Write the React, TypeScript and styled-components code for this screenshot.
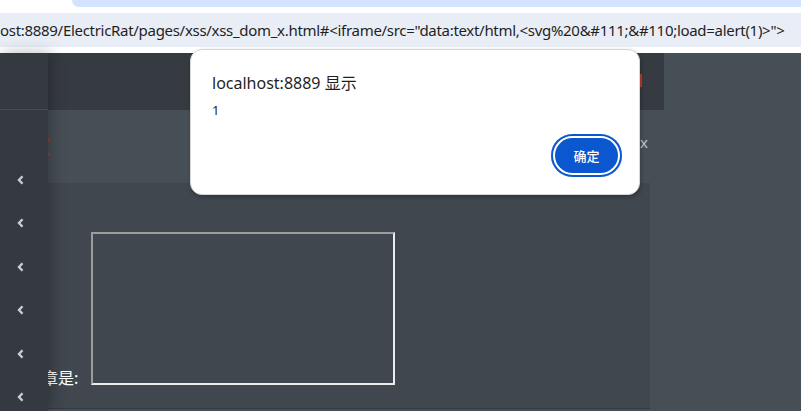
import React from "react";
import styled, { createGlobalStyle } from "styled-components";

const Global = createGlobalStyle`
  html, body { margin: 0; padding: 0; width: 801px; height: 411px; overflow: hidden; background: #fff; }
  * { box-sizing: border-box; }
`;

const Shell = styled.div`
  position: relative;
  width: 801px;
  height: 411px;
  display: flex;
  flex-direction: column;
  overflow: hidden;
  font-family: "Noto Sans", "Noto Sans CJK SC", sans-serif;
`;

const TabStrip = styled.div`
  height: 7px;
  background: #fff;
  display: flex;
`;

const InactiveStrip = styled.div`
  flex: 1;
  margin-left: 72px;
  background: #d3e3fd;
  border-bottom-left-radius: 8px;
`;

const Toolbar = styled.div`
  height: 46px;
  background: #fff;
  padding: 6px 0;
`;

const Omnibox = styled.div`
  height: 34px;
  background: #e9eef6;
  display: flex;
  align-items: center;
  overflow: hidden;
  white-space: nowrap;
  color: #1f1f1f;
  font-family: "Noto Sans", sans-serif;
  font-size: 15px;
  letter-spacing: -0.3px;
`;

const Page = styled.div`
  flex: 1;
  display: grid;
  grid-template-columns: 48px 1fr;
  background: #474f56;
  min-height: 0;
`;

const Sidebar = styled.div`
  position: relative;
  z-index: 2;
  background: #353a41;
  box-shadow: 3px 0 14px rgba(0, 0, 0, 0.28);
  display: flex;
  flex-direction: column;
`;

const SideHead = styled.div`
  height: 57px;
  border-bottom: 1px solid #464c54;
`;

const SideList = styled.div`
  display: flex;
  flex-direction: column;
  padding-top: 65px;
  gap: 33.4px;
  align-items: flex-start;
  padding-left: 17px;
`;

const Chevron = styled.svg`
  width: 7px;
  height: 10px;
  display: block;
`;

const Main = styled.div`
  display: flex;
  flex-direction: column;
  min-width: 0;
  position: relative;
  z-index: 1;
`;

const Header = styled.div`
  height: 57px;
  width: 616px;
  background: #363b42;
  display: flex;
  justify-content: flex-end;
  align-items: center;
  padding-right: 22px;
`;

const RedMark = styled.div`
  width: 3px;
  height: 13px;
  background: #c0392b;
  margin-top: -2px;
`;

const Band = styled.div`
  height: 73px;
  width: 602px;
  display: flex;
  align-items: center;
  justify-content: flex-end;
  padding-right: 2px;
  position: relative;
`;

const BandTitle = styled.span`
  color: #c2c6cb;
  font-size: 15px;
  font-family: "Noto Sans", sans-serif;
  margin-top: -10px;
`;

const Dots = styled.div`
  position: absolute;
  left: 0;
  top: 28px;
  display: flex;
  flex-direction: column;
  gap: 12px;
`;

const Dot = styled.div`
  width: 1px;
  height: 3px;
  background: #b03a3a;
`;

const Card = styled.div`
  width: 602px;
  height: 226px;
  background: #40474e;
  border-bottom: 1px solid #353a40;
  display: flex;
  align-items: flex-end;
  padding-bottom: 23px;
  overflow: visible;
`;

const Label = styled.span`
  color: #fff;
  font-family: "Noto Sans CJK SC", sans-serif;
  font-size: 16px;
  line-height: 18px;
  margin-left: -6px;
  margin-bottom: -1px;
  white-space: nowrap;
`;

const Box = styled.div`
  width: 304px;
  height: 153px;
  margin-left: 13px;
  border: 2px solid;
  border-color: #9c9c9c #ececec #ececec #9c9c9c;
`;

const Dialog = styled.div`
  position: absolute;
  left: 190px;
  top: 49px;
  width: 450px;
  height: 146px;
  background: #fff;
  border-radius: 12px;
  border: 1px solid #d6d6d6;
  box-shadow: 1px 2px 4px rgba(0, 0, 0, 0.25);
  z-index: 10;
  padding: 22px 20px 0 21px;
  display: flex;
  flex-direction: column;
`;

const DialogTitle = styled.div`
  font-family: "Noto Sans", "Noto Sans CJK SC", sans-serif;
  font-size: 16px;
  color: #1f1f1f;
  line-height: 22px;
`;

const DialogMessage = styled.div`
  font-family: "Noto Sans", sans-serif;
  font-size: 13px;
  color: #1f1f1f;
  margin-top: 7px;
  line-height: 18px;
`;

const Actions = styled.div`
  display: flex;
  justify-content: flex-end;
  margin-top: 15px;
`;

const OkButton = styled.button`
  width: 71px;
  height: 43px;
  border-radius: 22px;
  border: none;
  background: #0b57d0;
  color: #fff;
  font-family: "Noto Sans CJK SC", sans-serif;
  font-size: 13px;
  font-weight: 500;
  box-shadow: inset 0 0 0 2px #0b57d0, inset 0 0 0 4px #fff;
  margin-right: -3px;
  cursor: pointer;
`;

const ChevronIcon = () => (
  <Chevron viewBox="0 0 7 10">
    <path d="M5.5 1.2 L2 5 L5.5 8.8" fill="none" stroke="#c9cdd3" strokeWidth="2.4" strokeLinejoin="miter" />
  </Chevron>
);

export default function App() {
  const url =
    'ost:8889/ElectricRat/pages/xss/xss_dom_x.html#<iframe/src="data:text/html,<svg%20&#111;&#110;load=alert(1)>">';
  return (
    <Shell>
      <Global />
      <TabStrip>
        <InactiveStrip />
      </TabStrip>
      <Toolbar>
        <Omnibox>{url}</Omnibox>
      </Toolbar>
      <Page>
        <Sidebar>
          <SideHead />
          <SideList>
            {Array.from({ length: 6 }).map((_, i) => (
              <ChevronIcon key={i} />
            ))}
          </SideList>
        </Sidebar>
        <Main>
          <Header>
            <RedMark />
          </Header>
          <Band>
            <Dots>
              <Dot />
              <Dot />
            </Dots>
            <BandTitle>xss-dom-x</BandTitle>
          </Band>
          <Card>
            <Label>章是:</Label>
            <Box />
          </Card>
        </Main>
      </Page>
      <Dialog>
        <DialogTitle>localhost:8889 显示</DialogTitle>
        <DialogMessage>1</DialogMessage>
        <Actions>
          <OkButton>确定</OkButton>
        </Actions>
      </Dialog>
    </Shell>
  );
}
